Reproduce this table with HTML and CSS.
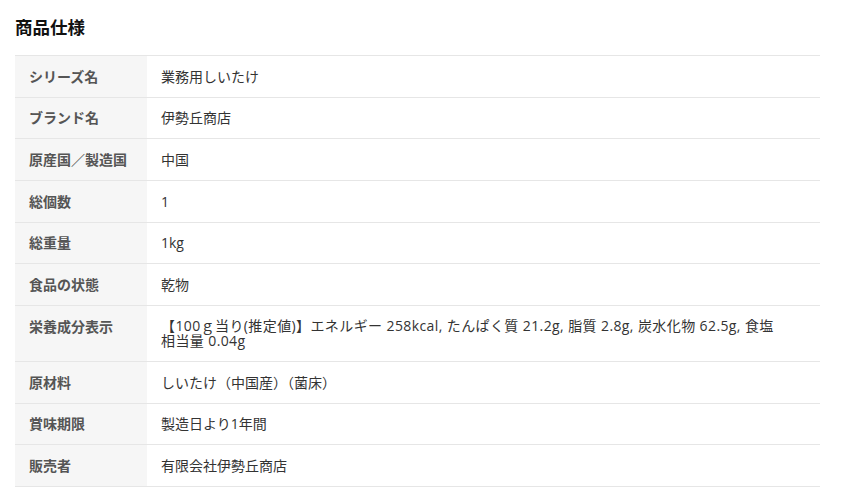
FILE: index.html
```html
<!DOCTYPE html>
<html lang="ja">
<head>
<meta charset="utf-8">
<link rel="stylesheet" href="styles.css">
</head>
<body>
<section class="spec">
  <h2 class="spec-title">商品仕様</h2>
  <table class="spec-table">
    <tr><th>シリーズ名</th><td>業務用しいたけ</td></tr>
    <tr><th>ブランド名</th><td>伊勢丘商店</td></tr>
    <tr><th>原産国／製造国</th><td>中国</td></tr>
    <tr><th>総個数</th><td>1</td></tr>
    <tr><th>総重量</th><td>1kg</td></tr>
    <tr><th>食品の状態</th><td>乾物</td></tr>
    <tr><th>栄養成分表示</th><td class="spec-long">【100ｇ当り(推定値)】エネルギー 258kcal, たんぱく質 21.2g, 脂質 2.8g, 炭水化物 62.5g, 食塩<br>相当量 0.04g</td></tr>
    <tr><th>原材料</th><td>しいたけ（中国産）（菌床）</td></tr>
    <tr><th>賞味期限</th><td>製造日より1年間</td></tr>
    <tr><th>販売者</th><td>有限会社伊勢丘商店</td></tr>
  </table>
</section>
</body>
</html>
```
FILE: styles.css
```css
html, body {
  margin: 0;
  padding: 0;
  background: #fff;
}
body {
  font-family: "Open Sans", "Noto Sans CJK JP", sans-serif;
  color: #333;
}
.spec {
  padding: 0 33px 0 15px;
}
.spec-title {
  margin: 0;
  padding: 15px 0 0;
  height: 40px;
  box-sizing: border-box;
  font-family: "Noto Sans CJK JP", sans-serif;
  font-size: 17.5px;
  line-height: 24px;
  font-weight: 700;
  color: #111;
}
.spec-table {
  width: 805px;
  border-collapse: collapse;
  margin-top: 15px;
  font-size: 14px;
  line-height: 15px;
}
.spec-table th,
.spec-table td {
  border-top: 1px solid #e6e6e6;
  border-bottom: 1px solid #e6e6e6;
  padding: 12.83px 14px 12.84px;
  text-align: left;
  vertical-align: top;
}
.spec-table th {
  width: 104px;
  background: #f6f6f6;
  color: #555;
  font-weight: 700;
  white-space: nowrap;
}
.spec-table td {
  color: #333;
  font-weight: 400;
}
.spec-table .spec-long {
  padding-top: 12.5px;
  padding-bottom: 12.5px;
  letter-spacing: 0.4px;
}
```
